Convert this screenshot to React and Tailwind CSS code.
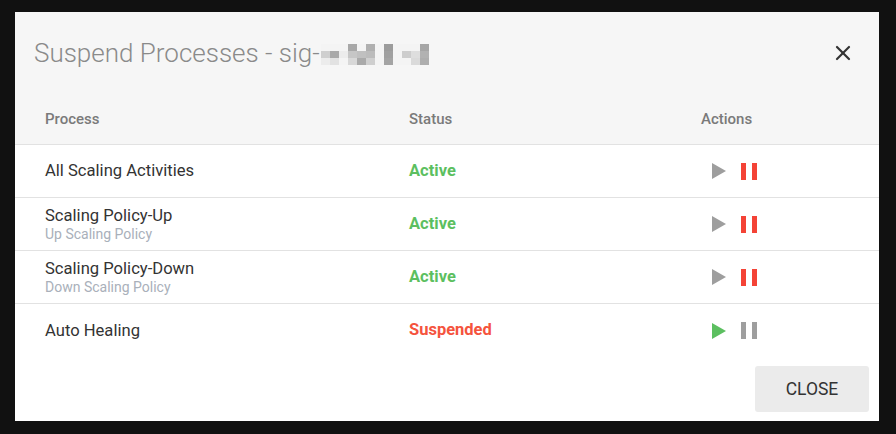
import { X } from "lucide-react";

const rows = [
  { name: "All Scaling Activities", sub: null, status: "Active" },
  { name: "Scaling Policy-Up", sub: "Up Scaling Policy", status: "Active" },
  { name: "Scaling Policy-Down", sub: "Down Scaling Policy", status: "Active" },
  { name: "Auto Healing", sub: null, status: "Suspended" },
];

// pixelated (redacted) part of the group name
const blur = [
  ["#f4f4f4", "#f4f4f4", "#f4f4f4", "#a8a8a8", "#f4f4f4", "#b0b0b0", "#f4f4f4", "#9c9c9c", "#f4f4f4", "#f4f4f4", "#f4f4f4", "#a6a6a6"],
  ["#cfcfcf", "#a9a9a9", "#ececec", "#c6c6c6", "#c0c0c0", "#bcbcbc", "#f4f4f4", "#a0a0a0", "#f4f4f4", "#cdcdcd", "#dedede", "#b2b2b2"],
  ["#ececec", "#e2e2e2", "#f4f4f4", "#d8d8d8", "#aaaaaa", "#cfcfcf", "#f4f4f4", "#a4a4a4", "#f4f4f4", "#f4f4f4", "#dadada", "#aeaeae"],
];

function Play({ color }) {
  return (
    <svg width="14" height="16" viewBox="0 0 14 16">
      <path d="M0 0 L14 8 L0 16 Z" fill={color} />
    </svg>
  );
}

function Pause({ color }) {
  return (
    <svg width="16" height="17" viewBox="0 0 16 17">
      <rect x="0" y="0" width="5" height="17" fill={color} />
      <rect x="11" y="0" width="5" height="17" fill={color} />
    </svg>
  );
}

export default function App() {
  return (
    <div className="w-[896px] h-[434px] bg-[#111111] pt-[12px] pl-[15px]" style={{ fontFamily: "Roboto, 'Liberation Sans', sans-serif" }}>
      <div className="w-[864px] h-[409px] bg-white flex flex-col overflow-hidden">
        <div className="bg-[#f6f6f6]">
          <div className="h-[81px] flex items-center justify-between pl-[19px] pr-[24px]">
            <div className="flex items-center text-[26px] font-light text-[#8a8a8a] pt-[2px]">
              <span>Suspend Processes - sig-</span>
              <span className="flex flex-col ml-[1px] mt-[2px]">
                {blur.map((r, i) => (
                  <span key={i} className="flex">
                    {r.map((c, j) => (
                      <span key={j} className="w-[9px] h-[7px]" style={{ background: c }} />
                    ))}
                  </span>
                ))}
              </span>
            </div>
            <X size={24} strokeWidth={2.2} className="text-[#333333]" />
          </div>
          <div className="h-[52px] grid grid-cols-[364px_292px_1fr] items-center pl-[30px] border-b border-[#e2e2e2] text-[15px] font-medium text-[#7a7a7a] pt-[1px]">
            <div>Process</div>
            <div>Status</div>
            <div>Actions</div>
          </div>
        </div>
        {rows.map((r, i) => {
          const active = r.status === "Active";
          return (
            <div
              key={r.name}
              className={`h-[53px] grid grid-cols-[364px_292px_1fr] items-center pl-[30px] ${i < rows.length - 1 ? "border-b border-[#e2e2e2]" : ""}`}
            >
              <div className="flex flex-col">
                <span className="text-[16.6px] text-[#333333] leading-[20px]">{r.name}</span>
                {r.sub && <span className="text-[14px] text-[#a9b0ba] leading-[17px]">{r.sub}</span>}
              </div>
              <div className={`text-[16.5px] font-bold ${active ? "text-[#5cbf60]" : "text-[#f5533d]"}`}>{r.status}</div>
              <div className="flex items-center gap-[15px] pl-[11px]">
                <Play color={active ? "#9e9e9e" : "#5cbf60"} />
                <Pause color={active ? "#f44336" : "#9e9e9e"} />
              </div>
            </div>
          );
        })}
        <div className="flex-1 flex items-end justify-end pr-[10px] pb-[9px]">
          <button className="w-[114px] h-[46px] bg-[#ebebeb] rounded-[3px] text-[17.5px] text-[#333333]">CLOSE</button>
        </div>
      </div>
    </div>
  );
}
